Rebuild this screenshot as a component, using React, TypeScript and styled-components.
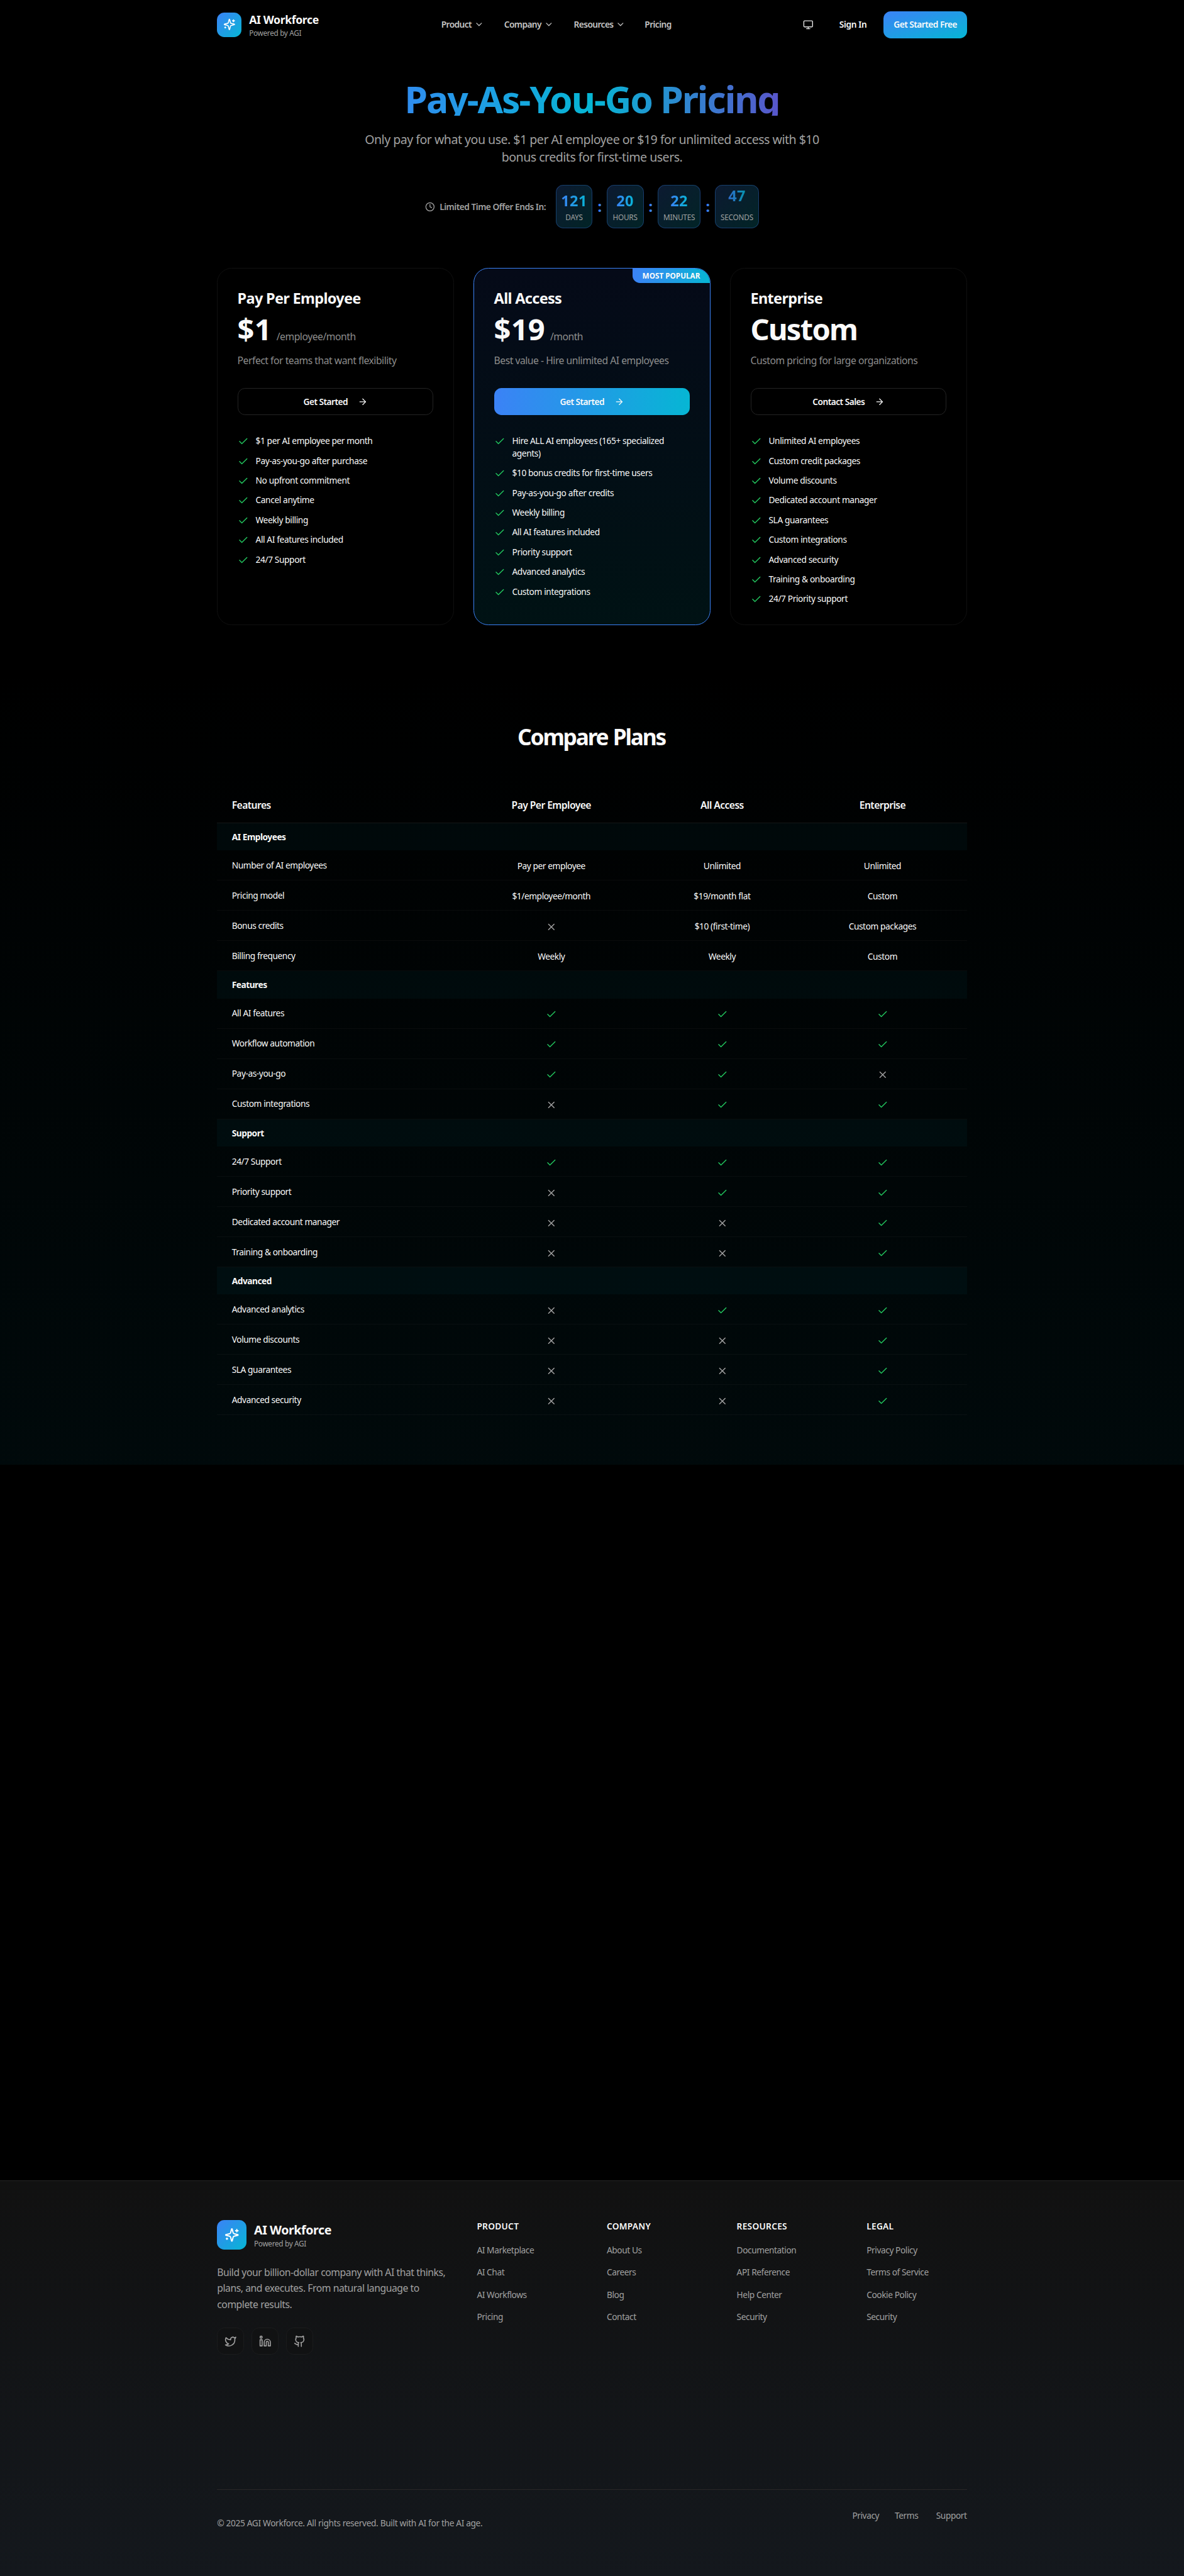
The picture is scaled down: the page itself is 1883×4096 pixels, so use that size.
import React from "react";
import styled, { createGlobalStyle } from "styled-components";
import { ArrowRight, Check, ChevronDown, Clock, Github, Linkedin, Monitor, Twitter, X } from "lucide-react";

const GlobalStyle = createGlobalStyle`
  *, *::before, *::after { box-sizing: border-box; }
  html, body { background: #000; }
  body { margin: 0; overflow-x: hidden; }
  h1, h2, h3, h4, p, ul { margin: 0; padding: 0; }
  ul { list-style: none; }
  a { color: inherit; text-decoration: none; }
  button { font: inherit; letter-spacing: inherit; color: inherit; border: 0; padding: 0; background: none; }
  svg { display: block; flex: none; }
`;

const brandGradient = "linear-gradient(to bottom right, #3b82f6, #06b6d4)";
const muted = "#a1a1a1";

const Page = styled.div`
  zoom: 0.98073;
  width: 1920px;
  height: 4177px;
  overflow: hidden;
  display: flex;
  flex-direction: column;
  background: #000;
  color: #fafafa;
  font-family: "Noto Sans", "Open Sans", sans-serif;
  font-size: 14px;
  line-height: 20px;
  letter-spacing: -0.031em;
`;

const Container = styled.div`
  width: 1216px;
  margin: 0 auto;
`;

/* Header */
const HeaderBar = styled(Container)`
  height: 80px;
  display: flex;
  align-items: center;
`;
const Brand = styled.a<{ $width?: number }>`
  display: flex;
  align-items: center;
  gap: 12px;
  width: ${p => (p.$width ? `${p.$width}px` : "auto")};
`;
const BrandMark = styled.span<{ $size: number }>`
  width: ${p => p.$size}px;
  height: ${p => p.$size}px;
  border-radius: 12px;
  display: grid;
  place-items: center;
  color: #fff;
  background: ${brandGradient};
`;
const BrandText = styled.span`
  display: flex;
  flex-direction: column;
`;
const BrandName = styled.span<{ $size: number }>`
  font-size: ${p => p.$size}px;
  line-height: 28px;
  font-weight: 700;
  letter-spacing: -0.022em;
`;
const BrandTag = styled.span`
  font-size: 12px;
  line-height: 16px;
  letter-spacing: -0.026em;
  color: ${muted};
`;
const Nav = styled.nav`
  display: grid;
  grid-template-columns: 102px 113px 115px auto;
  font-weight: 600;
  letter-spacing: -0.042em;
  color: #c4c4c4;
`;
const NavItem = styled.a`
  display: flex;
  align-items: center;
  gap: 4px;
`;
const HeaderActions = styled.div`
  margin-left: auto;
  display: flex;
  align-items: center;
  gap: 28px;
  font-weight: 600;
`;
const ThemeToggle = styled.button`
  width: 44px;
  height: 44px;
  display: grid;
  place-items: center;
  color: #e6e6e6;
`;
const SignIn = styled.a`
  width: 44px;
  white-space: nowrap;
  letter-spacing: -0.026em;
`;
const PrimaryCta = styled.button`
  width: 135px;
  height: 44px;
  border-radius: 12px;
  background: ${brandGradient};
  letter-spacing: -0.0387em;
`;

/* Hero */
const Hero = styled.section`
  width: 768px;
  margin: 0 auto;
  padding-top: 48px;
  text-align: center;
`;
const HeroTitle = styled.h1`
  height: 60px;
  padding-top: 2.5px;
  font-size: 60px;
  line-height: 60px;
  font-weight: 700;
  letter-spacing: -0.0352em;
  white-space: nowrap;
  color: transparent;
  background: linear-gradient(to right, #3b82f6, #06b6d4, #6e3cc8);
  background-clip: text;
  -webkit-background-clip: text;
`;
const HeroText = styled.p`
  margin: 24.5px 0 31.5px;
  font-size: 20px;
  line-height: 28px;
  letter-spacing: -0.0267em;
  color: ${muted};
`;
const Countdown = styled.div`
  display: flex;
  justify-content: center;
  align-items: center;
  gap: 16px;
`;
const CountdownLabel = styled.div`
  display: flex;
  align-items: center;
  gap: 8px;
  width: 196px;
  white-space: nowrap;
  font-weight: 600;
  letter-spacing: -0.036em;
  color: ${muted};
`;
const CountdownUnits = styled.div`
  display: flex;
  align-items: center;
`;
const Colon = styled.span`
  width: 22.7px;
  font-size: 24px;
  line-height: 32px;
  font-weight: 700;
  color: #3b82f6;
`;
const Unit = styled.div<{ $width: number }>`
  width: ${p => p.$width}px;
  height: 70px;
  padding: 8px 0;
  border: 1px solid rgba(59, 130, 246, 0.32);
  border-radius: 12px;
  background: linear-gradient(to bottom right, #0c1a31, #022426);
`;
const UnitValue = styled.div<{ $ticking?: boolean }>`
  width: max-content;
  height: 32px;
  padding-top: 1px;
  margin: 0 auto;
  font-size: 24px;
  line-height: 32px;
  font-weight: 700;
  letter-spacing: 0.015em;
  color: transparent;
  background: linear-gradient(to right, #3b82f6, #06b6d4);
  background-clip: text;
  -webkit-background-clip: text;
  opacity: ${p => (p.$ticking ? 0.78 : 1)};
  transform: translateY(${p => (p.$ticking ? -8 : 0)}px);
`;
const UnitLabel = styled.div`
  margin-top: 4px;
  font-size: 12px;
  line-height: 16px;
  letter-spacing: -0.0165em;
  color: ${muted};
`;

/* Plans */
const Plans = styled(Container)`
  margin-top: 64px;
  display: grid;
  grid-template-columns: repeat(3, 1fr);
  gap: 32px;
`;
const PlanCard = styled.article<{ $featured?: boolean }>`
  position: relative;
  overflow: hidden;
  padding: 33px 32px 32px;
  border: 1px solid ${p => (p.$featured ? "#3b82f6" : "#101010")};
  border-radius: 24px;
  background: ${p => (p.$featured ? "linear-gradient(to bottom, #050a18, #001214)" : "#000")};
`;
const PopularBadge = styled.span`
  position: absolute;
  top: 0;
  right: 0;
  width: 125px;
  padding: 4px 0;
  text-align: center;
  font-size: 12px;
  line-height: 16px;
  font-weight: 700;
  letter-spacing: 0;
  border-bottom-left-radius: 12px;
  background: linear-gradient(to right, #3b82f6, #06b6d4);
`;
const PlanName = styled.h3`
  font-size: 24px;
  line-height: 32px;
  font-weight: 700;
  letter-spacing: -0.0295em;
`;
const PriceRow = styled.div`
  margin-top: 7px;
  height: 50px;
  padding-top: 1.5px;
  display: flex;
  align-items: baseline;
  gap: 8px;
`;
const Price = styled.span<{ $word?: boolean }>`
  font-size: 48px;
  line-height: 49px;
  font-weight: 700;
  letter-spacing: ${p => (p.$word ? "-0.037em" : "0.005em")};
`;
const Period = styled.span`
  font-size: 16px;
  line-height: 24px;
  letter-spacing: -0.03em;
  color: #8c8c8c;
`;
const PlanText = styled.p`
  margin-top: 16.5px;
  margin-bottom: -0.5px;
  font-size: 16px;
  line-height: 24px;
  white-space: nowrap;
  letter-spacing: -0.0305em;
  color: #8c8c8c;
`;
const PlanButton = styled.button<{ $filled?: boolean }>`
  margin: 32px 0;
  width: 100%;
  height: 44px;
  display: flex;
  align-items: center;
  justify-content: center;
  gap: 16px;
  border-radius: 12px;
  border: ${p => (p.$filled ? "0" : "1px solid #242424")};
  background: ${p => (p.$filled ? "linear-gradient(to right, #3b82f6, #06b6d4)" : "#000")};
  font-weight: 600;
  letter-spacing: -0.039em;
`;
const PlanFeatures = styled.ul`
  display: flex;
  flex-direction: column;
  gap: 12px;
  letter-spacing: -0.028em;
`;
const PlanFeature = styled.li`
  display: flex;
  align-items: flex-start;
  gap: 11.5px;
  svg { margin-top: 2px; color: #22c55e; }
`;

/* Comparison */
const CompareSection = styled.section`
  margin-top: 80px;
  padding: 80px 0;
  background: linear-gradient(to bottom, #000, rgba(6, 182, 212, 0.05));
`;
const CompareTitle = styled.h2`
  padding: 1px 2px 0 0;
  text-align: center;
  font-size: 36px;
  line-height: 40px;
  font-weight: 700;
  letter-spacing: -0.0625em;
  word-spacing: 0.04em;
`;
const Table = styled(Container)`
  margin-top: 63px;
`;
const tableGrid = `
  display: grid;
  grid-template-columns: 388px 308px 246px 274px;
`;
const TableHead = styled.div`
  ${tableGrid}
  height: 57px;
  padding-top: 16.5px;
  border-bottom: 1px solid #141616;
  font-size: 16px;
  line-height: 24px;
  font-weight: 600;
  letter-spacing: -0.037em;
`;
const HeadCell = styled.div<{ $first?: boolean }>`
  padding-left: ${p => (p.$first ? 24 : 0)}px;
  text-align: ${p => (p.$first ? "left" : "center")};
`;
const GroupRow = styled.div`
  height: 44px;
  padding: 12px 24px;
  font-weight: 700;
  letter-spacing: -0.0355em;
  background: rgba(6, 182, 212, 0.045);
`;
const Row = styled.div`
  ${tableGrid}
  height: 49px;
  border-bottom: 1px solid rgba(255, 255, 255, 0.035);
`;
const LabelCell = styled.div`
  padding: 14px 24px;
`;
const ValueCell = styled.div<{ $icon?: boolean; $yes?: boolean }>`
  display: flex;
  justify-content: center;
  padding-top: ${p => (p.$icon ? 17 : 15)}px;
  color: ${p => (p.$icon ? (p.$yes ? "#22c55e" : muted) : "inherit")};
`;

/* Footer */
const FooterArea = styled.footer`
  margin-top: 1160px;
  flex: 1;
  border-top: 1px solid #262626;
  background: linear-gradient(to bottom, #111, #14181d);
`;
const FooterGrid = styled(Container)`
  height: 500px;
  padding-top: 64px;
  display: grid;
  grid-template-columns: 373.33px repeat(4, 162.67px);
  column-gap: 48px;
`;
const FooterText = styled.p`
  margin: 24px 0;
  font-size: 16px;
  line-height: 26px;
  letter-spacing: -0.0274em;
  color: ${muted};
`;
const Socials = styled.div`
  display: flex;
  gap: 12px;
  color: ${muted};
`;
const SocialLink = styled.a`
  width: 44px;
  height: 44px;
  display: grid;
  place-items: center;
  border: 1px solid #1b1c1d;
  border-radius: 12px;
  background: #111213;
`;
const FooterHeading = styled.h4`
  font-size: 14px;
  line-height: 20px;
  font-weight: 600;
  letter-spacing: 0.02em;
  text-transform: uppercase;
`;
const FooterLinks = styled.ul`
  margin-top: 16.4px;
  display: flex;
  flex-direction: column;
  gap: 12px;
  line-height: 24px;
  color: ${muted};
`;
const FooterBottom = styled(Container)`
  display: flex;
  justify-content: space-between;
  align-items: flex-start;
  padding-top: 32px;
  border-top: 1px solid #2a2727;
  color: ${muted};
`;
const Copyright = styled.p`
  margin-top: 12px;
  letter-spacing: -0.0255em;
`;
const LegalLinks = styled.div`
  display: grid;
  grid-template-columns: 69px 67px 50px;
`;

const navItems = [
  { label: "Product", menu: true },
  { label: "Company", menu: true },
  { label: "Resources", menu: true },
  { label: "Pricing", menu: false },
];

const countdown = [
  { value: "121", label: "DAYS", width: 60 },
  { value: "20", label: "HOURS", width: 60 },
  { value: "22", label: "MINUTES", width: 70 },
  { value: "47", label: "SECONDS", width: 72, ticking: true },
];

const plans = [
  {
    name: "Pay Per Employee", price: "$1", period: "/employee/month",
    text: "Perfect for teams that want flexibility", cta: "Get Started",
    features: ["$1 per AI employee per month", "Pay-as-you-go after purchase", "No upfront commitment", "Cancel anytime", "Weekly billing", "All AI features included", "24/7 Support"],
  },
  {
    name: "All Access", price: "$19", period: "/month", featured: true,
    text: "Best value - Hire unlimited AI employees", cta: "Get Started",
    features: ["Hire ALL AI employees (165+ specialized agents)", "$10 bonus credits for first-time users", "Pay-as-you-go after credits", "Weekly billing", "All AI features included", "Priority support", "Advanced analytics", "Custom integrations"],
  },
  {
    name: "Enterprise", price: "Custom", period: "",
    text: "Custom pricing for large organizations", cta: "Contact Sales",
    features: ["Unlimited AI employees", "Custom credit packages", "Volume discounts", "Dedicated account manager", "SLA guarantees", "Custom integrations", "Advanced security", "Training & onboarding", "24/7 Priority support"],
  },
];

type Value = string | boolean;
const groups: { title: string; rows: [string, Value, Value, Value][] }[] = [
  { title: "AI Employees", rows: [
    ["Number of AI employees", "Pay per employee", "Unlimited", "Unlimited"],
    ["Pricing model", "$1/employee/month", "$19/month flat", "Custom"],
    ["Bonus credits", false, "$10 (first-time)", "Custom packages"],
    ["Billing frequency", "Weekly", "Weekly", "Custom"],
  ] },
  { title: "Features", rows: [
    ["All AI features", true, true, true],
    ["Workflow automation", true, true, true],
    ["Pay-as-you-go", true, true, false],
    ["Custom integrations", false, true, true],
  ] },
  { title: "Support", rows: [
    ["24/7 Support", true, true, true],
    ["Priority support", false, true, true],
    ["Dedicated account manager", false, false, true],
    ["Training & onboarding", false, false, true],
  ] },
  { title: "Advanced", rows: [
    ["Advanced analytics", false, true, true],
    ["Volume discounts", false, false, true],
    ["SLA guarantees", false, false, true],
    ["Advanced security", false, false, true],
  ] },
];

const footerColumns = [
  { title: "Product", links: ["AI Marketplace", "AI Chat", "AI Workflows", "Pricing"] },
  { title: "Company", links: ["About Us", "Careers", "Blog", "Contact"] },
  { title: "Resources", links: ["Documentation", "API Reference", "Help Center", "Security"] },
  { title: "Legal", links: ["Privacy Policy", "Terms of Service", "Cookie Policy", "Security"] },
];

function SparkleIcon({ size }: { size: number }) {
  return (
    <svg width={size} height={size} viewBox="0 0 24 24" fill="none" stroke="currentColor" strokeWidth={2} strokeLinecap="round" strokeLinejoin="round">
      <path d="M9.937 15.5A2 2 0 0 0 8.5 14.063l-6.135-1.582a.5.5 0 0 1 0-.962L8.5 9.936A2 2 0 0 0 9.937 8.5l1.582-6.135a.5.5 0 0 1 .963 0L14.063 8.5A2 2 0 0 0 15.5 9.937l6.135 1.581a.5.5 0 0 1 0 .964L15.5 14.063a2 2 0 0 0-1.437 1.437l-1.582 6.135a.5.5 0 0 1-.963 0z" />
      <path d="M20 3v4" />
      <path d="M22 5h-4" />
      <path d="M4 17v2" />
      <path d="M5 18H3" />
    </svg>
  );
}

function Logo({ large }: { large?: boolean }) {
  return (
    <Brand $width={large ? undefined : 363.5}>
      <BrandMark $size={large ? 48 : 40}><SparkleIcon size={large ? 24 : 20} /></BrandMark>
      <BrandText>
        <BrandName $size={large ? 20 : 18}>AI Workforce</BrandName>
        <BrandTag>Powered by AGI</BrandTag>
      </BrandText>
    </Brand>
  );
}

function Cell({ value }: { value: Value }) {
  if (typeof value === "string") return <ValueCell>{value}</ValueCell>;
  return <ValueCell $icon $yes={value}>{value ? <Check size={18} /> : <X size={18} />}</ValueCell>;
}

export default function App() {
  return (
    <>
      <GlobalStyle />
      <Page>
        <HeaderBar as="header">
          <Logo />
          <Nav>
            {navItems.map(item => (
              <NavItem key={item.label}>{item.label}{item.menu && <ChevronDown size={16} />}</NavItem>
            ))}
          </Nav>
          <HeaderActions>
            <ThemeToggle aria-label="Theme"><Monitor size={17} /></ThemeToggle>
            <SignIn>Sign In</SignIn>
            <PrimaryCta>Get Started Free</PrimaryCta>
          </HeaderActions>
        </HeaderBar>

        <Hero>
          <HeroTitle>Pay-As-You-Go Pricing</HeroTitle>
          <HeroText>Only pay for what you use. $1 per AI employee or $19 for unlimited access with $10 bonus credits for first-time users.</HeroText>
          <Countdown>
            <CountdownLabel><Clock size={16} />Limited Time Offer Ends In:</CountdownLabel>
            <CountdownUnits>
              {countdown.map((unit, i) => (
                <React.Fragment key={unit.label}>
                  {i > 0 && <Colon>:</Colon>}
                  <Unit $width={unit.width}>
                    <UnitValue $ticking={unit.ticking}>{unit.value}</UnitValue>
                    <UnitLabel>{unit.label}</UnitLabel>
                  </Unit>
                </React.Fragment>
              ))}
            </CountdownUnits>
          </Countdown>
        </Hero>

        <Plans>
          {plans.map(plan => (
            <PlanCard key={plan.name} $featured={plan.featured}>
              {plan.featured && <PopularBadge>MOST POPULAR</PopularBadge>}
              <PlanName>{plan.name}</PlanName>
              <PriceRow>
                <Price $word={!plan.period}>{plan.price}</Price>
                {plan.period && <Period>{plan.period}</Period>}
              </PriceRow>
              <PlanText>{plan.text}</PlanText>
              <PlanButton $filled={plan.featured}>{plan.cta}<ArrowRight size={16} /></PlanButton>
              <PlanFeatures>
                {plan.features.map(feature => (
                  <PlanFeature key={feature}><Check size={18} /><span>{feature}</span></PlanFeature>
                ))}
              </PlanFeatures>
            </PlanCard>
          ))}
        </Plans>

        <CompareSection>
          <CompareTitle>Compare Plans</CompareTitle>
          <Table>
            <TableHead>
              <HeadCell $first>Features</HeadCell>
              <HeadCell>Pay Per Employee</HeadCell>
              <HeadCell>All Access</HeadCell>
              <HeadCell>Enterprise</HeadCell>
            </TableHead>
            {groups.map(group => (
              <React.Fragment key={group.title}>
                <GroupRow>{group.title}</GroupRow>
                {group.rows.map(([label, ...values]) => (
                  <Row key={label}>
                    <LabelCell>{label}</LabelCell>
                    {values.map((value, i) => <Cell key={i} value={value} />)}
                  </Row>
                ))}
              </React.Fragment>
            ))}
          </Table>
        </CompareSection>

        <FooterArea>
          <FooterGrid>
            <div>
              <Logo large />
              <FooterText>Build your billion-dollar company with AI that thinks, plans, and executes. From natural language to complete results.</FooterText>
              <Socials>
                <SocialLink aria-label="Twitter"><Twitter size={20} /></SocialLink>
                <SocialLink aria-label="LinkedIn"><Linkedin size={20} /></SocialLink>
                <SocialLink aria-label="GitHub"><Github size={20} /></SocialLink>
              </Socials>
            </div>
            {footerColumns.map(column => (
              <div key={column.title}>
                <FooterHeading>{column.title}</FooterHeading>
                <FooterLinks>
                  {column.links.map(link => <li key={link}><a>{link}</a></li>)}
                </FooterLinks>
              </div>
            ))}
          </FooterGrid>
          <FooterBottom>
            <Copyright>© 2025 AGI Workforce. All rights reserved. Built with AI for the AI age.</Copyright>
            <LegalLinks>
              <a>Privacy</a>
              <a>Terms</a>
              <a>Support</a>
            </LegalLinks>
          </FooterBottom>
        </FooterArea>
      </Page>
    </>
  );
}
